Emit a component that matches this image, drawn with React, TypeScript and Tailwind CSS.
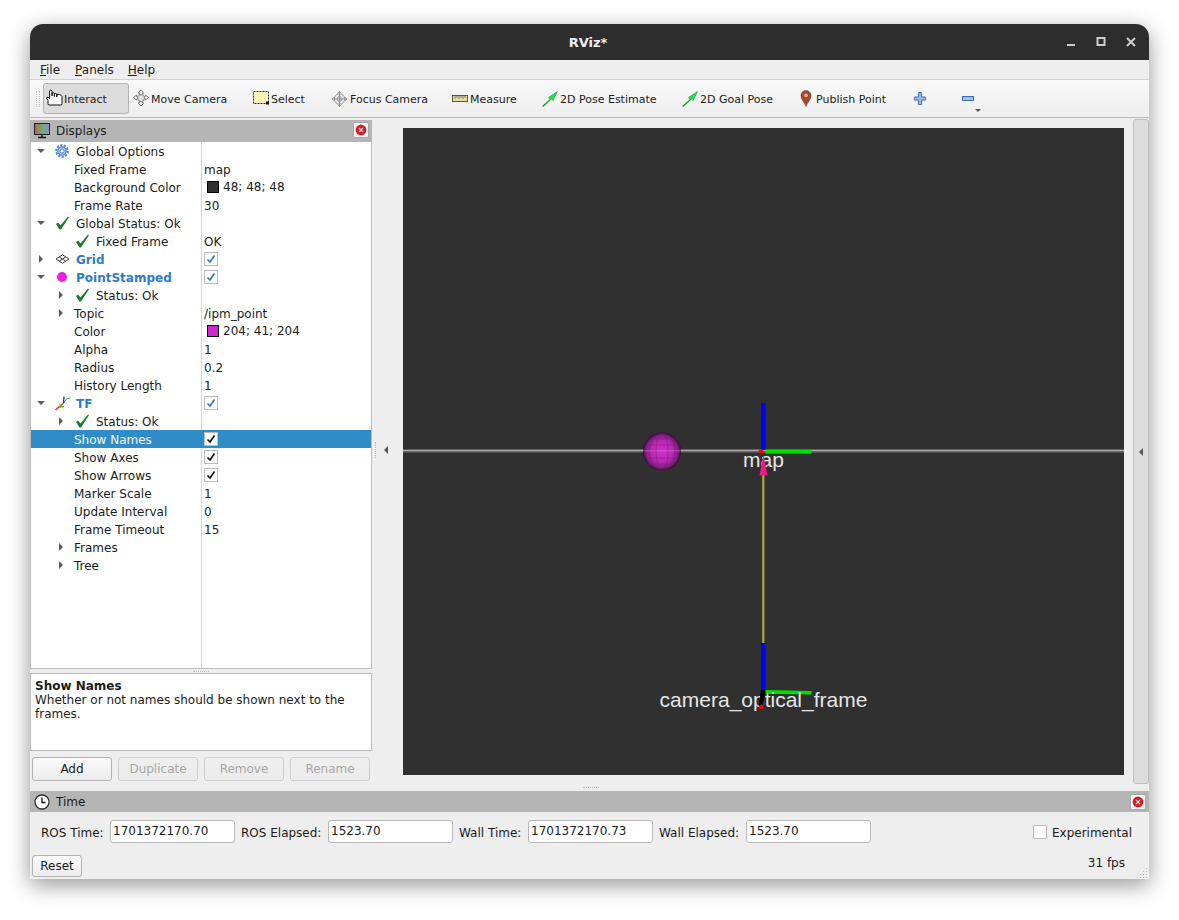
import React from "react";

const Hand = () => (
  <svg width="18" height="17" viewBox="0 0 18 17" className="mb-[3px] shrink-0">
    <path d="M3 16 Q2 16 2 14.5 L2 11.5 L0.8 9.5 Q0.8 8 2 8 L3.6 9.6 L3.6 1.8 Q4.8 0.2 6 1.8 L6 7 L6 4.2 Q7.2 3.2 8.4 4.2 L8.4 7.5 L8.4 5 Q9.6 4.2 10.8 5 L10.8 8 L10.8 5.6 Q12 4.8 13.4 5.6 Q15.5 6 16 7.5 L16 14.5 Q16 16 15 16 Z" fill="#fff" stroke="#111" strokeWidth="1" strokeLinejoin="round" />
  </svg>
);
const MoveCam = () => (
  <svg width="16" height="18" viewBox="0 0 16 18" className="mb-[2px] shrink-0">
    <g fill="#f2f2f2" stroke="#808080" strokeWidth="1">
      <path d="M8 1 L11 4 L9.5 4 L9.5 6 L6.5 6 L6.5 4 L5 4 Z" />
      <path d="M8 17 L11 14 L9.5 14 L9.5 12 L6.5 12 L6.5 14 L5 14 Z" />
      <path d="M0.5 8.5 L3.5 6 L3.5 7.5 L5 7.5 L5 10 L3.5 10 L3.5 11 Z" />
      <path d="M15.5 8.5 L12.5 6 L12.5 7.5 L11 7.5 L11 10 L12.5 10 L12.5 11 Z" />
      <circle cx="8" cy="9" r="3.5" fill="#e2e2e2" />
    </g>
  </svg>
);
const SelectIco = () => (
  <svg width="16" height="14" viewBox="0 0 16 14" className="mb-[2px] shrink-0">
    <rect x="0.5" y="0.5" width="15" height="12" fill="#fdf8b8" stroke="#222" strokeDasharray="2 1" />
    <rect x="13" y="10.5" width="3" height="3" fill="#111" />
  </svg>
);
const Focus = () => (
  <svg width="17" height="18" viewBox="0 0 18 18" className="shrink-0">
    <g stroke="#8c8c8c" strokeWidth="1" fill="none">
      <circle cx="9" cy="9" r="5.5" fill="#ececec" />
      <circle cx="9" cy="9" r="2.5" />
      <path d="M9 1 V17 M1 9 H17" />
      <path d="M7 3 L9 1 L11 3 M7 15 L9 17 L11 15 M3 7 L1 9 L3 11 M15 7 L17 9 L15 11" />
    </g>
  </svg>
);
const Ruler = () => (
  <svg width="16" height="7" viewBox="0 0 16 7" className="mb-[1px] shrink-0">
    <rect x="0.5" y="0.5" width="15" height="6" fill="#e8dca0" stroke="#555" />
    <path d="M3 1 V4 M5 1 V3 M7 1 V4 M9 1 V3 M11 1 V4 M13 1 V3" stroke="#666" strokeWidth="0.8" />
  </svg>
);
const GreenArrow = () => (
  <svg width="16" height="16" viewBox="0 0 16 16" className="shrink-0">
    <path d="M0.5 15 L8 8.5 L6.5 6.5 L15.5 0.5 L11 9.5 L9.5 8 L1.5 15.5 Z" fill="#19e84a" stroke="#0f7f2a" strokeWidth="0.5" />
    <path d="M1 15 L8.5 8.5" stroke="#0a9c2c" strokeWidth="1" />
  </svg>
);
const Pin = () => (
  <svg width="14" height="17" viewBox="0 0 14 17" className="mr-[1px] shrink-0">
    <path d="M7 16.5 C5.5 12 2 9.5 2 5.6 A5 5 0 0 1 12 5.6 C12 9.5 8.5 12 7 16.5 Z" fill="#a8452a" stroke="#6e3a22" strokeWidth="0.6" />
    <circle cx="7" cy="5.4" r="1.8" fill="#e9b7a0" />
  </svg>
);
const Plus = () => (
  <svg width="12" height="13" viewBox="0 0 12 13" className="shrink-0">
    <path d="M4.5 0.5 H7.5 V5 H11.5 V8 H7.5 V12.5 H4.5 V8 H0.5 V5 H4.5 Z" fill="#9cc0ea" stroke="#3d6fb5" />
  </svg>
);
const Minus = () => (
  <svg width="12" height="5" viewBox="0 0 12 5" className="shrink-0">
    <rect x="0.5" y="0.5" width="11" height="4" fill="#9cc0ea" stroke="#3d6fb5" />
  </svg>
);
const Monitor = () => (
  <svg width="17" height="16" viewBox="0 0 17 16" className="shrink-0">
    <defs>
      <linearGradient id="mon" x1="0" y1="0" x2="1" y2="0">
        <stop offset="0" stopColor="#c85a5a" />
        <stop offset="0.5" stopColor="#6cb06c" />
        <stop offset="1" stopColor="#8a8ae0" />
      </linearGradient>
    </defs>
    <rect x="0.5" y="0.5" width="15" height="11" fill="url(#mon)" stroke="#222" />
    <path d="M8 12 V14 M4 14.5 H12" stroke="#111" strokeWidth="1.4" />
  </svg>
);
const Gear = () => (
  <svg width="14" height="14" viewBox="0 0 14 14">
    <circle cx="7" cy="7" r="5.8" fill="none" stroke="#4a80d0" strokeWidth="2" strokeDasharray="2.2 1.35" />
    <circle cx="7" cy="7" r="4.2" fill="#a6c4ee" stroke="#3f74c4" strokeWidth="1" />
    <circle cx="7" cy="7" r="2" fill="#fff" stroke="#3f74c4" strokeWidth="0.8" />
  </svg>
);
const Check = () => (
  <svg width="15" height="14" viewBox="0 0 15 14">
    <path d="M1 8 L3 6.5 L5.5 9.5 L13 0.5 L14 1.2 L6 13.5 L4.5 13.5 Z" fill="#1d7a2a" />
  </svg>
);
const GridIco = () => (
  <svg width="15" height="10" viewBox="0 0 15 10">
    <path d="M7.5 0.8 L14 5 L7.5 9.2 L1 5 Z M4.2 2.9 L10.8 7.1 M10.8 2.9 L4.2 7.1" fill="none" stroke="#444" strokeWidth="1" />
  </svg>
);
const Dot = () => (
  <svg width="14" height="14" viewBox="0 0 14 14">
    <circle cx="7" cy="7" r="5" fill="#f01ee0" />
  </svg>
);
const TfIco = () => (
  <svg width="16" height="15" viewBox="0 0 16 15">
    <path d="M8 7.5 L0.5 14" stroke="#e02020" strokeWidth="1.3" />
    <path d="M4 11 L9 10.5" stroke="#20c020" strokeWidth="1.3" />
    <path d="M8 7.5 L12 2.5 L15.5 2" stroke="#20b020" strokeWidth="1" fill="none" />
    <path d="M8.5 7.5 L9 0.5" stroke="#2020e0" strokeWidth="1.3" />
    <path d="M4 6.5 L5.5 10" stroke="#d8c020" strokeWidth="1" fill="none" />
  </svg>
);
const Clock = () => (
  <svg width="16" height="16" viewBox="0 0 16 16" className="shrink-0">
    <circle cx="8" cy="8" r="7" fill="#fff" stroke="#333" strokeWidth="1.3" />
    <path d="M8 3.5 V8.5 H11.5" fill="none" stroke="#111" strokeWidth="1.3" />
  </svg>
);
const Close = () => (
  <div className="flex h-[16px] w-[16px] items-center justify-center rounded-[2px] border border-[#a8a8a8] bg-[#f7f7f7]">
    <svg width="12" height="12" viewBox="0 0 12 12">
      <circle cx="6" cy="6" r="5.4" fill="#d01f26" />
      <path d="M4 4 L8 8 M8 4 L4 8" stroke="#f6c8c8" strokeWidth="1.3" />
    </svg>
  </div>
);

const Arrow = ({ dir }: { dir?: "down" | "right" }) =>
  dir === "down" ? (
    <div className="h-0 w-0 border-x-[4px] border-t-[4px] border-x-transparent border-t-[#5c5c5c]" />
  ) : dir === "right" ? (
    <div className="h-0 w-0 border-y-[4px] border-l-[4px] border-y-transparent border-l-[#5c5c5c]" />
  ) : null;

const Box = ({ checked, blue }: { checked?: boolean; blue?: boolean }) => (
  <div className="flex h-[14px] w-[14px] items-center justify-center border border-[#bcbcbc] bg-white">
    {checked && (
      <svg width="10" height="10" viewBox="0 0 10 10">
        <path d="M1.5 5.5 L4 8 L8.5 1.5" fill="none" stroke={blue ? "#2f78c2" : "#111"} strokeWidth="1.7" />
      </svg>
    )}
  </div>
);

type RowT = {
  d: number;
  a?: "down" | "right";
  i?: React.ReactNode;
  t: string;
  v?: string;
  sw?: string;
  cb?: "blue" | "black";
  bold?: boolean;
  sel?: boolean;
};

const rows: RowT[] = [
  { d: 0, a: "down", i: <Gear />, t: "Global Options" },
  { d: 1, t: "Fixed Frame", v: "map" },
  { d: 1, t: "Background Color", v: "48; 48; 48", sw: "bg-[#303030]" },
  { d: 1, t: "Frame Rate", v: "30" },
  { d: 0, a: "down", i: <Check />, t: "Global Status: Ok" },
  { d: 1, i: <Check />, t: "Fixed Frame", v: "OK" },
  { d: 0, a: "right", i: <GridIco />, t: "Grid", cb: "blue", bold: true },
  { d: 0, a: "down", i: <Dot />, t: "PointStamped", cb: "blue", bold: true },
  { d: 1, a: "right", i: <Check />, t: "Status: Ok" },
  { d: 1, a: "right", t: "Topic", v: "/ipm_point" },
  { d: 1, t: "Color", v: "204; 41; 204", sw: "bg-[#cc29cc]" },
  { d: 1, t: "Alpha", v: "1" },
  { d: 1, t: "Radius", v: "0.2" },
  { d: 1, t: "History Length", v: "1" },
  { d: 0, a: "down", i: <TfIco />, t: "TF", cb: "blue", bold: true },
  { d: 1, a: "right", i: <Check />, t: "Status: Ok" },
  { d: 1, t: "Show Names", cb: "black", sel: true },
  { d: 1, t: "Show Axes", cb: "black" },
  { d: 1, t: "Show Arrows", cb: "black" },
  { d: 1, t: "Marker Scale", v: "1" },
  { d: 1, t: "Update Interval", v: "0" },
  { d: 1, t: "Frame Timeout", v: "15" },
  { d: 1, a: "right", t: "Frames" },
  { d: 1, a: "right", t: "Tree" },
];

const Row = ({ r }: { r: RowT }) => (
  <div className={`flex h-[18px] items-center ${r.sel ? "bg-[#308cc6] text-[#f4f4f4]" : ""}`}>
    <div className={`flex h-full w-[170px] shrink-0 items-center ${r.d === 1 ? "pl-[20px]" : ""}`}>
      <div className="flex w-[20px] shrink-0 justify-center">
        <Arrow dir={r.a} />
      </div>
      {r.i ? (
        <div className="flex w-[25px] shrink-0 pl-[4px]">{r.i}</div>
      ) : (
        <div className="w-[3px] shrink-0" />
      )}
      <span className={`mt-[2px] ${r.bold ? "font-bold text-[#2f7cc6]" : ""}`}>{r.t}</span>
    </div>
    <div className={`flex h-full flex-1 items-center border-l pl-[2px] ${r.sel ? "border-[#308cc6]" : "border-[#d4d4d4]"}`}>
      {r.cb ? (
        <Box checked blue={r.cb === "blue"} />
      ) : r.sw ? (
        <div className="flex items-center gap-[4px] pl-[3px]">
          <div className={`h-[12px] w-[12px] border border-black ${r.sw}`} />
          <span>{r.v}</span>
        </div>
      ) : (
        <span className="mt-[2px]">{r.v}</span>
      )}
    </div>
  </div>
);

const ToolBtn = ({ w, icon, label, active }: { w: string; icon: React.ReactNode; label?: string; active?: boolean }) => (
  <div
    className={`flex h-[31px] shrink-0 items-center text-[11px] ${w} ${
      active ? "gap-0 rounded-[3px] border border-[#b4b4b4] bg-[#dcdcdc] pl-[2px]" : "gap-[2px] pl-[4px]"
    }`}
  >
    {icon}
    {label && <span className="mt-[3px]">{label}</span>}
  </div>
);

const PanelBtn = ({ t, off }: { t: string; off?: boolean }) => (
  <div
    className={`flex h-[24px] w-[80px] items-center justify-center rounded-[3px] border bg-gradient-to-b ${
      off ? "border-[#cfcfcf] from-[#efefef] to-[#ececec] text-[#a8a8a8]" : "border-[#b2b2b2] from-[#fbfbfb] to-[#ececec]"
    }`}
  >
    {t}
  </div>
);

const Field = ({ label, lw, value }: { label: string; lw: string; value: string }) => (
  <>
    <span className={`${lw} mt-[2px] shrink-0`}>{label}</span>
    <div className="flex h-[23px] w-[125px] shrink-0 items-start rounded-[3px] border border-[#b8b8b8] bg-white pl-[2px] leading-[20px]">
      {value}
    </div>
  </>
);

const Scene = () => (
  <svg width="721" height="647" viewBox="403 128 721 647" className="block">
    <defs>
      <radialGradient id="ball" cx="0.5" cy="0.5" r="0.5">
        <stop offset="0" stopColor="#cf30cb" />
        <stop offset="0.55" stopColor="#b82ab4" />
        <stop offset="0.85" stopColor="#861e84" />
        <stop offset="1" stopColor="#2c0c2c" />
      </radialGradient>
    </defs>
    <rect x="403" y="449.6" width="721" height="1.3" fill="#b4b4b4" />
    <rect x="403" y="451.2" width="721" height="1.2" fill="#7c7c7c" />
    <circle cx="662" cy="451.5" r="19" fill="url(#ball)" />
    <g fill="none" stroke="#6e1a6c" strokeWidth="0.7" opacity="0.6">
      <ellipse cx="662" cy="451.5" rx="13" ry="18.5" />
      <ellipse cx="662" cy="451.5" rx="6" ry="18.5" />
      <path d="M647 439 H677 M644 445 H680 M644 458 H680 M647 464 H677" />
    </g>
    <rect x="643" y="450" width="38" height="1.5" fill="#d080d0" opacity="0.4" />
    <rect x="761" y="403" width="4.5" height="47" fill="#0000ff" />
    <rect x="765.5" y="450" width="46" height="3.6" fill="#00e000" />
    <text x="763.5" y="467" textAnchor="middle" fill="#e6e6e6" fontSize="21" fontFamily="'Liberation Sans', sans-serif">map</text>
    <rect x="762.2" y="475" width="2.2" height="168" fill="#aaaa44" />
    <path d="M763.5 455 L767.5 475.5 L759.5 475.5 Z" fill="#ee1a8c" />
    <circle cx="761" cy="451.3" r="2.4" fill="#ff0000" />
    <rect x="761" y="643" width="4.6" height="47" fill="#0000ff" />
    <path d="M765.5 690 L811.5 691 L811.5 694.6 L765.5 693.8 Z" fill="#00e000" />
    <text x="763.5" y="707" textAnchor="middle" fill="#e6e6e6" fontSize="21" fontFamily="'Liberation Sans', sans-serif">camera_optical_frame</text>
    <path d="M763.2 690 L761 706" stroke="#000" strokeWidth="4.5" />
    <circle cx="761.2" cy="706.8" r="2.4" fill="#ff0000" />
  </svg>
);

export default function App() {
  return (
    <div className="h-[920px] w-[1179px] overflow-hidden bg-white pl-[30px] pt-[24px] font-['DejaVu_Sans',sans-serif] text-[12px] leading-[18px] text-[#1b1b1b]">
      <div className="flex h-[855px] w-[1119px] flex-col overflow-hidden rounded-t-[13px] bg-[#eeeeee] shadow-[0_6px_22px_rgba(0,0,0,0.42)]">
        {/* title */}
        <div className="relative flex h-[36px] shrink-0 items-center justify-center bg-[#2d2d2d] text-[13px] font-bold text-[#eeeeee]">
          <span className="mr-[3px] mt-[2px]">RViz*</span>
          <div className="absolute right-0 top-0 flex h-full items-center">
            <svg width="10" height="10" viewBox="0 0 10 10" className="mr-[20px]">
              <rect x="1" y="7" width="8" height="2" fill="#cfcfcf" />
            </svg>
            <svg width="10" height="10" viewBox="0 0 10 10" className="mr-[20px]">
              <rect x="1.5" y="1" width="7" height="7" fill="none" stroke="#cfcfcf" strokeWidth="2" />
            </svg>
            <svg width="10" height="10" viewBox="0 0 10 10" className="mr-[13px]">
              <path d="M1 1 L9 9 M9 1 L1 9" stroke="#cfcfcf" strokeWidth="2" />
            </svg>
          </div>
        </div>
        {/* menu */}
        <div className="flex h-[20px] shrink-0 items-center border-b border-[#d2d2d2] bg-[#eeeeee] pl-[10px]">
          <span><span className="underline">F</span>ile</span>
          <span className="ml-[15px]"><span className="underline">P</span>anels</span>
          <span className="ml-[14px]"><span className="underline">H</span>elp</span>
        </div>
        {/* toolbar */}
        <div className="flex h-[38px] shrink-0 items-center border-b border-[#b9b9b9] bg-gradient-to-b from-[#f9f9f9] to-[#eeeeee]">
          <div className="ml-[6px] mr-[3px] flex h-[16px] w-[4px] border-x border-dotted border-[#c2c2c2]" />
          <ToolBtn w="w-[86px]" icon={<Hand />} label="Interact" active />
          <ToolBtn w="w-[120px]" icon={<MoveCam />} label="Move Camera" />
          <ToolBtn w="w-[78px]" icon={<SelectIco />} label="Select" />
          <ToolBtn w="w-[121px]" icon={<Focus />} label="Focus Camera" />
          <ToolBtn w="w-[90px]" icon={<Ruler />} label="Measure" />
          <ToolBtn w="w-[140px]" icon={<GreenArrow />} label="2D Pose Estimate" />
          <ToolBtn w="w-[117px]" icon={<GreenArrow />} label="2D Goal Pose" />
          <ToolBtn w="w-[115px]" icon={<Pin />} label="Publish Point" />
          <ToolBtn w="w-[48px]" icon={<Plus />} />
          <div className="relative flex h-[31px] w-[23px] items-center pl-[4px]">
            <Minus />
            <div className="absolute bottom-[2px] right-[0px] h-0 w-0 border-x-[3px] border-t-[3px] border-x-transparent border-t-[#555]" />
          </div>
        </div>
        {/* main */}
        <div className="flex h-[666px] shrink-0">
          <div className="flex w-[342px] shrink-0 flex-col pt-[2px]">
            <div className="flex h-[22px] shrink-0 items-center bg-[#b5b5b5] pl-[4px]">
              <Monitor />
              <span className="ml-[5px] flex-1">Displays</span>
              <div className="mb-[2px] mr-[3px]"><Close /></div>
            </div>
            <div className="flex h-[527px] shrink-0 flex-col border-x border-b border-[#bdbdbd] bg-white">
              {rows.map((r, i) => (
                <Row key={i} r={r} />
              ))}
              <div className="ml-[170px] flex-1 border-l border-[#d4d4d4]" />
            </div>
            <div className="flex h-[4px] shrink-0 items-center justify-center">
              <div className="w-[16px] border-t border-dotted border-[#bbb]" />
            </div>
            <div className="h-[78px] shrink-0 border border-[#bdbdbd] bg-white px-[4px] pt-[5px] leading-[14px]">
              <div className="font-bold">Show Names</div>
              <div>Whether or not names should be shown next to the frames.</div>
            </div>
            <div className="mt-[6px] flex gap-[6px] pl-[2px]">
              <PanelBtn t="Add" />
              <PanelBtn t="Duplicate" off />
              <PanelBtn t="Remove" off />
              <PanelBtn t="Rename" off />
            </div>
          </div>
          <div className="flex w-[31px] shrink-0 items-center pb-[2px] pl-[3px]">
            <div className="h-[16px] border-l border-dotted border-[#bbb]" />
            <div className="ml-[8px] h-0 w-0 border-y-[4px] border-r-[4px] border-y-transparent border-r-[#555]" />
          </div>
          <div className="w-[721px] shrink-0 pt-[10px]">
            <div className="h-[647px] w-[721px] bg-[#303030]">
              <Scene />
            </div>
          </div>
          <div className="ml-[9px] mt-[1px] flex h-[665px] w-[16px] items-center justify-center rounded-[3px] border border-[#bdbdbd] bg-[#dcdcdc]">
            <div className="h-0 w-0 border-y-[4px] border-r-[4px] border-y-transparent border-r-[#555]" />
          </div>
        </div>
        {/* splitter */}
        <div className="flex h-[7px] shrink-0 items-center justify-center pl-[3px]">
          <div className="w-[16px] border-t border-dotted border-[#bbb]" />
        </div>
        {/* time */}
        <div className="flex h-[21px] shrink-0 items-center bg-[#b5b5b5] pl-[4px]">
          <Clock />
          <span className="ml-[6px] flex-1">Time</span>
          <div className="mr-[3px]"><Close /></div>
        </div>
        <div className="relative flex flex-1 flex-col">
          <div className="mt-[8px] flex h-[23px] items-center pl-[11px]">
            <Field label="ROS Time:" lw="w-[69px]" value="1701372170.70" />
            <div className="w-[6px] shrink-0" />
            <Field label="ROS Elapsed:" lw="w-[87px]" value="1523.70" />
            <div className="w-[6px] shrink-0" />
            <Field label="Wall Time:" lw="w-[69px]" value="1701372170.73" />
            <div className="w-[6px] shrink-0" />
            <Field label="Wall Elapsed:" lw="w-[87px]" value="1523.70" />
            <div className="ml-auto flex items-center gap-[5px] pr-[17px]">
              <Box />
              <span className="mt-[2px]">Experimental</span>
            </div>
          </div>
          <div className="mt-[12px] flex h-[22px] items-center pl-[2px] pr-[24px]">
            <div className="flex h-[22px] w-[50px] items-center justify-center rounded-[3px] border border-[#b2b2b2] bg-gradient-to-b from-[#fbfbfb] to-[#ececec]">Reset</div>
            <span className="mb-[6px] ml-auto">31 fps</span>
          </div>
          <svg width="11" height="11" viewBox="0 0 11 11" className="absolute bottom-[1px] right-[1px]">
            <g fill="#bdbdbd">
              <rect x="9" y="1" width="1" height="1" />
              <rect x="6" y="4" width="1" height="1" /><rect x="9" y="4" width="1" height="1" />
              <rect x="3" y="7" width="1" height="1" /><rect x="6" y="7" width="1" height="1" /><rect x="9" y="7" width="1" height="1" />
              <rect x="0" y="10" width="1" height="1" /><rect x="3" y="10" width="1" height="1" /><rect x="6" y="10" width="1" height="1" /><rect x="9" y="10" width="1" height="1" />
            </g>
          </svg>
        </div>
      </div>
    </div>
  );
}
